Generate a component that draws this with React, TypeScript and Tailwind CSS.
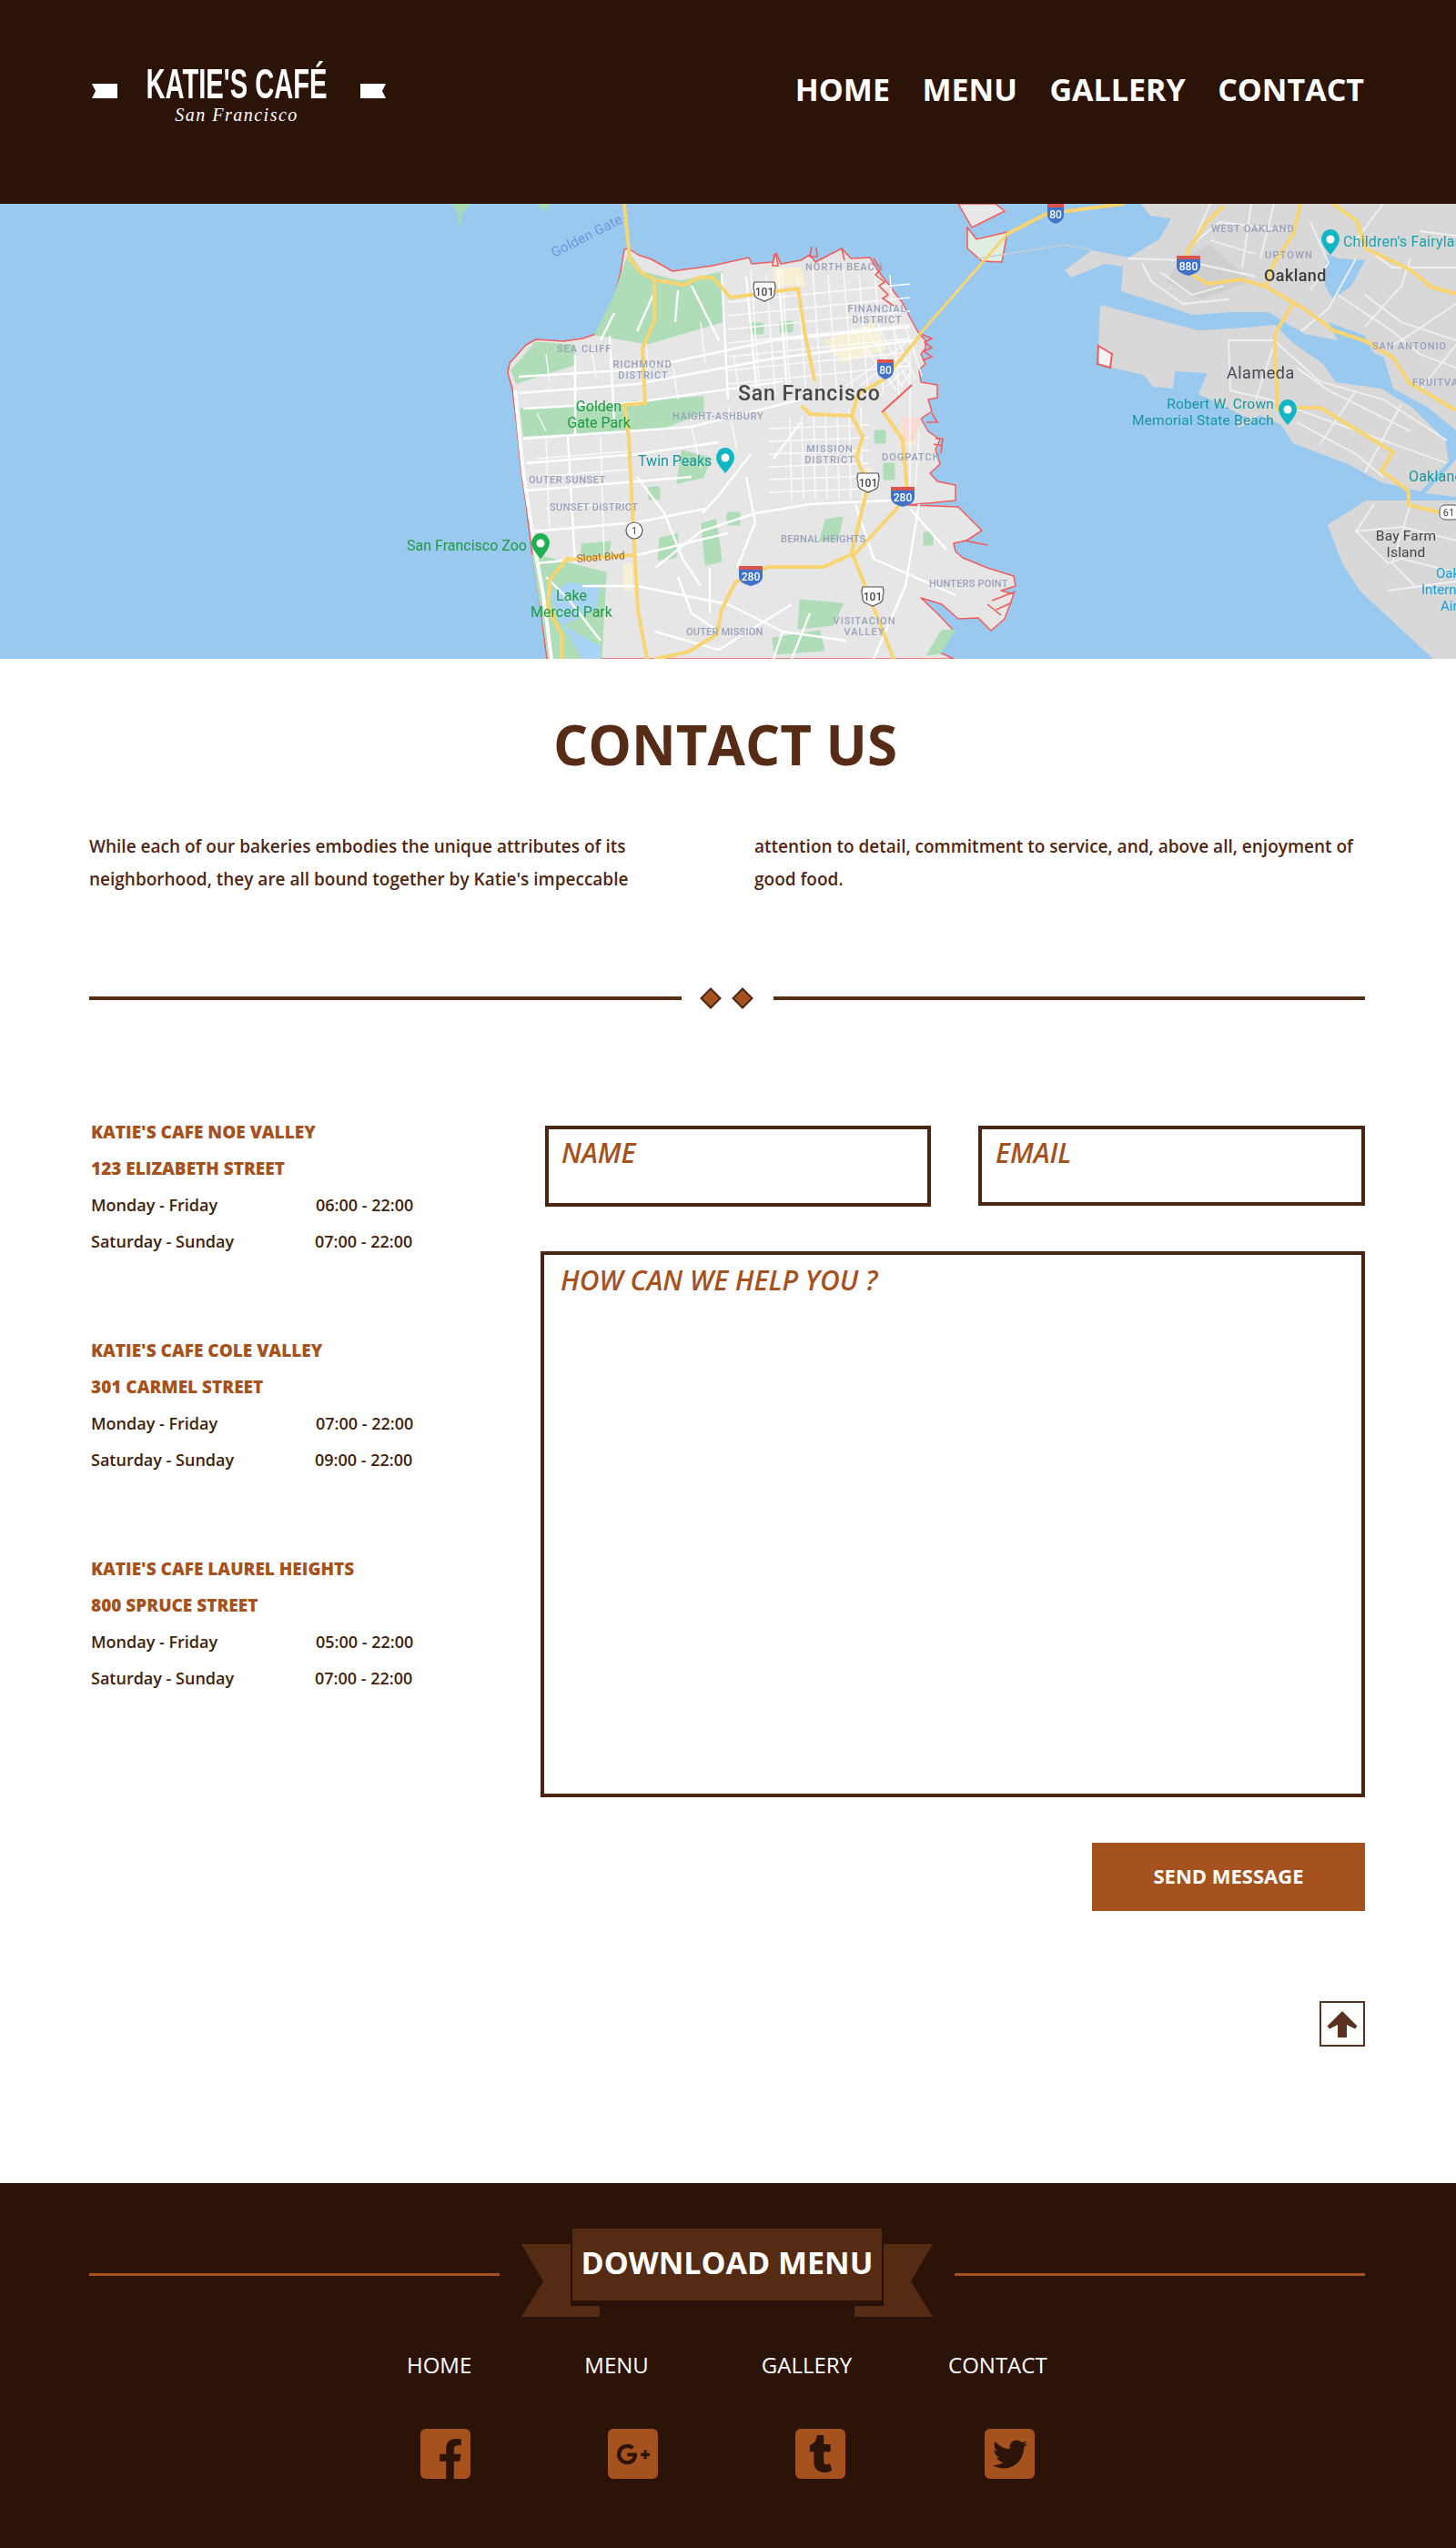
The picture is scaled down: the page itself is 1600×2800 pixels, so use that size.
import React from "react";
import { FaFacebookF, FaGooglePlusG, FaTumblr, FaTwitter } from "react-icons/fa";

type P = number[];
const pts = (a: P) => {
  const out: string[] = [];
  for (let i = 0; i < a.length; i += 2) out.push(a[i] + "," + a[i + 1]);
  return out.join(" ");
};

const SF = [686,50,691,49,701,56,716,61,739,74,783,68,823,59,826,66,849,64,853,54,858,66,880,62,890,56,896,64,925,49,935,60,956,59,968,78,977,89,985,100,992,109,1000,125,1010,143,1017,150,1017,159,1012,165,1017,176,1010,182,1012,196,1030,199,1030,213,1020,215,1024,228,1012,236,1020,250,1033,259,1028,270,1033,286,1022,296,1030,305,1050,309,1050,326,997,331,1053,333,1065,345,1079,359,1062,370,1048,373,1050,382,1058,389,1085,400,1114,409,1116,420,1100,425,1114,429,1104,456,1089,469,1075,455,1053,456,1035,440,1012,433,1030,450,1048,469,1033,493,1048,500,987,500,601,500,592,430,584,379,578,330,573,296,568,245,563,203,558,186,560,175,568,166,578,155,589,149,605,150,619,151,640,148,655,143,665,125,675,103,682,75];
const OAK = [1254,0,1264,13,1287,16,1274,39,1240,59,1200,51,1170,73,1177,81,1214,66,1234,69,1232,96,1270,108,1310,122,1354,119,1394,119,1420,135,1434,143,1485,153,1521,169,1531,203,1568,223,1600,249,1600,0];
const ALA = [1209,111,1317,139,1368,136,1401,133,1421,153,1454,176,1468,196,1518,203,1551,223,1588,259,1592,283,1561,316,1518,306,1481,286,1421,263,1408,243,1384,232,1375,240,1361,246,1358,240,1372,236,1340,220,1317,209,1327,186,1291,184,1289,203,1267,201,1257,188,1217,179,1207,156];
const BAY = [1501,326,1600,326,1600,500,1575,500,1495,426,1475,395,1459,353];
const EAST = [1566,318,1592,290,1600,280,1600,322];
const parks: P[] = [
  [691,56,675,103,655,143,711,153,793,129,793,76,747,86,706,76],
  [563,183,589,153,630,156,630,176,568,196],
  [573,226,772,213,772,229,727,246,576,254],
  [586,386,665,406,660,500,604,500],
  [750,272,780,280,772,300,745,306],
  [880,436,925,440,915,462,878,466],
  [850,478,900,470,905,490,852,494],
  [772,352,786,348,792,392,776,396],
  [726,368,744,364,742,388,724,390],
  [908,348,925,345,920,368,902,370],
  [1035,470,1048,469,1033,493,1020,495],
  [825,132,838,132,838,142,825,142],[858,130,870,130,870,140,858,140],[962,250,972,250,972,262,962,262],[972,286,982,286,982,302,972,302],[1016,362,1024,362,1024,374,1016,374],[714,312,724,312,724,324,714,324],[800,340,812,340,812,352,800,352],[640,375,670,372,668,385,640,388],
];
const blocks: P[] = [
  [850,70,880,70,885,90,850,90],[905,150,960,130,975,160,925,175],[990,240,1010,240,1005,265,990,265],[950,290,958,290,958,310,950,310],[685,395,695,395,695,425,685,425],
];
const roads: P[] = [
  [570,190,700,182,850,150,1000,135],[570,208,700,198,850,170,1005,150],[575,225,700,218,860,195],[575,258,760,245,880,215],[578,285,700,275,790,262],[580,315,760,300],[585,360,700,350,775,335],[590,395,620,392,700,386,800,362],
  [632,166,632,255],[624,256,632,395],[670,145,675,240],[675,120,660,150],[720,95,700,140],[745,95,742,130],[760,90,790,150],[793,76,800,215],[820,80,832,210],[855,72,865,205],
  [640,420,700,420,800,440,860,470,930,480],[720,400,770,360,830,340,890,330,1000,325],[700,300,730,340,750,390,770,420],[825,275,790,320,772,340],[820,300,830,350,810,400],[880,240,850,280],[745,410,760,450,790,470],[720,470,790,490,870,440],[1010,330,995,420,960,500],[940,330,960,390,1050,430],[860,470,850,500],[890,450,870,500],[600,410,625,435,660,480],
  [1000,335,1040,380],[780,400,780,450],
];
const thin: P[] = [
  [600,165,604,195],[590,230,600,250],[650,160,655,190],[740,180,745,215],[710,150,712,185],
  [590,280,690,272],[592,300,690,292],[600,335,690,328],[660,256,664,390],[600,258,604,360],
  [770,130,775,175],[806,165,812,205],[760,245,770,290],[800,222,810,270],[1000,150,1000,320],[1010,250,1005,325],
];
const g1: P[] = [];
for (let i = 0; i < 10; i++) g1.push([825 + i * 17, 72 + (i % 2) * 6, 835 + i * 17, 210]);
for (let i = 0; i < 7; i++) g1.push([800, 108 + i * 15, 1000, 88 + i * 15]);
for (let i = 0; i < 5; i++) g1.push([935 + i * 15, 135, 985 + i * 7, 205 - i * 4]);
for (let i = 0; i < 5; i++) g1.push([930 + i * 15, 200, 1000, 150 + i * 9]);
const g2: P[] = [];
for (let i = 0; i < 7; i++) g2.push([868 + i * 13, 235 - i * 2, 870 + i * 13, 325]);
for (let i = 0; i < 6; i++) g2.push([845, 247 + i * 14, 955, 243 + i * 14]);
const piers: P[] = [
  [892,47,890,58,898,58,897,48],[925,49,928,62],[851,55,849,68,855,68,853,56],[960,60,968,72,962,78,972,86,966,90,976,100,970,104,982,112],
  [1012,143,1024,148,1016,152,1024,158,1015,162,1024,168,1014,172],[1024,230,1030,240,1018,240],[1028,258,1036,258,1034,274],[1026,264,1036,266],
  [1090,436,1116,426],[1095,446,1112,438],[1085,440,1100,452],[1060,370,1085,375],
];
const eastRoads: P[] = [
  [1240,60,1300,62,1380,80],[1255,65,1265,85,1300,110,1350,105],[1275,75,1310,100,1345,90],
  [1330,0,1310,45,1340,20,1420,30],[1375,0,1365,70],[1400,0,1385,60],[1330,40,1380,55],[1440,20,1460,65,1440,95],[1490,60,1460,115,1430,140],[1520,0,1490,40,1530,70,1600,70],[1470,100,1530,140,1560,165,1600,180],[1500,100,1540,130,1600,150],[1540,90,1500,135],[1600,110,1540,150,1520,160],[1600,155,1560,205],[1560,30,1600,35],[1550,60,1540,90],
  [1350,150,1400,150,1450,195,1520,215,1590,260],[1350,150,1352,205,1395,215,1590,285],[1425,180,1460,205,1550,250],[1490,205,1450,265],[1540,220,1500,295],[1400,155,1380,215],[1425,240,1490,275,1520,300],[1510,330,1490,360,1525,395,1540,390,1600,405],[1490,360,1540,355,1600,370],[1550,330,1530,395,1555,420],[1525,425,1600,415],
];
const bridge = [1010,144,1107,33];
const yellow: P[] = [
  [686,0,691,50,691,59,705,76,721,84,752,89,768,81,783,81,803,103,839,98,877,93,884,140,895,193],
  [719,86,719,129,706,159,709,219,686,221,691,256,696,359,701,446,711,500],
  [882,223,890,231,936,233,948,256,941,279,954,309,936,383,961,446,982,500],
  [1010,146,971,193,943,209,936,233],
  [971,229,992,259,997,316,987,333,941,383,905,399,844,399,808,416,793,446,788,473,757,492,721,500],
  [624,389,604,413,602,443,617,473,617,500],[624,391,696,386],
  [1107,33,1150,11,1234,0],
  [1344,3,1327,19,1304,53,1311,78,1327,88,1364,83,1391,91,1434,116,1465,139,1501,151,1531,169,1548,196,1598,226],
  [1429,0,1421,33,1398,69,1391,91],
  [1465,0,1491,19,1501,49,1551,73,1572,91,1600,99],
  [1421,109,1401,143,1401,156,1404,226],
  [1426,224,1451,224,1531,273,1518,293,1548,316,1548,331,1582,339],
];

const Lbl = ({ x, y, t, c = "#98a1ba", s = 11, a = "start", ls = 1, w = 500 }: { x: number; y: number; t: string; c?: string; s?: number; a?: "start" | "middle" | "end"; ls?: number; w?: number }) => (
  <text x={x} y={y} fill={c} fontSize={s} textAnchor={a} letterSpacing={ls} fontWeight={w}>{t}</text>
);
const US = ({ x, y, t }: { x: number; y: number; t: string }) => (
  <g>
    <path d={`M${x - 11} ${y - 10}h22q2 6 0 10q1 6 -4 8l-7 3l-7 -3q-5 -2 -4 -8q-2 -4 0 -10z`} fill="#fff" stroke="#555" strokeWidth="1.2" />
    <text x={x} y={y + 5} fill="#444" fontSize="12" fontWeight="500" textAnchor="middle">{t}</text>
  </g>
);
const I = ({ x, y, t, w = 13 }: { x: number; y: number; t: string; w?: number }) => (
  <g>
    <path d={`M${x - w} ${y - 7}h${2 * w}v8q0 7 -${w} 10q-${w} -3 -${w} -10z`} fill="#3f72c8" />
    <rect x={x - w} y={y - 11} width={2 * w} height={4} fill="#d9534f" />
    <text x={x} y={y + 5} fill="#fff" fontSize="12" fontWeight="500" textAnchor="middle">{t}</text>
  </g>
);
const Pin = ({ x, y, c }: { x: number; y: number; c: string }) => (
  <g>
    <path d={`M${x} ${y + 16}q-10 -11 -10 -17a10 11 0 1 1 20 0q0 6 -10 17z`} fill={c} />
    <circle cx={x} cy={y - 1} r="4.5" fill="#fff" />
  </g>
);

function MapArt() {
  return (
    <svg viewBox="0 0 1600 500" width="1600" height="500" className="block blur-[0.4px] font-['Roboto',sans-serif]">
      <rect width="1600" height="500" fill="#9ac9f0" />
      <path d="M496 0l6 8 3 20 3-18 10-10zM590 0l8 8 8-8z" fill="#a9dab4" />
      <polygon points={pts(OAK)} fill="#d8d8d8" />
      <polygon points={pts(ALA)} fill="#d8d8d8" />
      <polygon points={pts(BAY)} fill="#d8d8d8" />
      <polygon points={pts(EAST)} fill="#d8d8d8" />
      <polygon points="1207,156 1222,165 1220,180 1206,176" fill="#f4f4f4" stroke="#f05c5c" strokeWidth="2" />
      <polygon points="1053,0 1094,0 1104,8 1068,26" fill="#e8e8e8" stroke="#f05c5c" strokeWidth="1.5" />
      <polygon points="1063,26 1073,39 1107,31 1101,64 1079,63 1063,49" fill="#dfeee0" stroke="#f05c5c" strokeWidth="1.5" />
      <path d="M1075 60L1170 45 1200 51" fill="none" stroke="#c5cfd8" strokeWidth="1.5" />
      <polygon points="1300,60 1330,45 1375,85 1320,105 1280,85" fill="#cfcfcf" />
      <polygon points="1458,55 1470,60 1500,62 1485,90 1465,105 1456,90" fill="#9ac9f0" />
      <polygon points="1460,130 1500,145 1510,165 1470,150" fill="#9ac9f0" />
      <polygon points={pts(SF)} fill="#e6e6e6" stroke="#f05c5c" strokeWidth="1.5" strokeLinejoin="round" />
      {parks.map((p, i) => <polygon key={i} points={pts(p)} fill="#aeddb7" stroke="#aeddb7" strokeWidth="3" strokeLinejoin="round" />)}
      {blocks.map((p, i) => <polygon key={i} points={pts(p)} fill="#f7f0d4" />)}
      <polygon points="604,429 624,416 660,419 655,446 619,463 660,486 660,500 640,500 614,456" fill="#a9d4f5" />
      <polygon points="990,235 1012,235 1004,262 992,262" fill="#fbd9d4" />
      {[...g1, ...g2, ...thin].map((p, i) => <polyline key={i} points={pts(p)} fill="none" stroke="#fbfbfb" strokeWidth="1.4" />)}
      {roads.map((p, i) => <polyline key={i} points={pts(p)} fill="none" stroke="#fff" strokeWidth="2.4" strokeLinejoin="round" />)}
      {eastRoads.map((p, i) => <polyline key={i} points={pts(p)} fill="none" stroke="#f1f1f1" strokeWidth="1.8" />)}
      <polyline points="566,205 575,296 588,380 597,430 606,500" fill="none" stroke="#fff" strokeWidth="4" />
      {piers.map((p, i) => <polyline key={i} points={pts(p)} fill="none" stroke="#f05c5c" strokeWidth="1.6" />)}
      {yellow.map((p, i) => <polyline key={i} points={pts(p)} fill="none" stroke="#f8d570" strokeWidth="4" strokeLinejoin="round" strokeLinecap="round" />)}
      <polyline points={pts(bridge)} fill="none" stroke="#f8d570" strokeWidth="3" />
      <path d="M1002 199L969 229" stroke="#f05c5c" strokeWidth="2" />
      <g transform="rotate(-27 609 59)"><Lbl x={609} y={59} t="Golden Gate" c="#6c96da" s={15} ls={0.3} w={400} /></g>
      <Lbl x={885} y={73} t="NORTH BEACH" />
      <Lbl x={964} y={119} t="FINANCIAL" a="middle" />
      <Lbl x={964} y={131} t="DISTRICT" a="middle" />
      <Lbl x={612} y={163} t="SEA CLIFF" />
      <Lbl x={706} y={180} t="RICHMOND" a="middle" />
      <Lbl x={707} y={192} t="DISTRICT" a="middle" />
      <Lbl x={811} y={216} t="San Francisco" c="#484848" s={23} ls={0.9} w={500} />
      <Lbl x={658} y={228} t="Golden" c="#1f9a43" s={16} ls={0} w={400} a="middle" />
      <Lbl x={658} y={246} t="Gate Park" c="#1f9a43" s={16} ls={0} w={400} a="middle" />
      <Lbl x={739} y={237} t="HAIGHT-ASHBURY" ls={0.6} />
      <Lbl x={912} y={273} t="MISSION" a="middle" />
      <Lbl x={912} y={285} t="DISTRICT" a="middle" />
      <Lbl x={969} y={282} t="DOGPATCH" />
      <Lbl x={701} y={288} t="Twin Peaks" c="#16979c" s={16} ls={0} w={400} />
      <Lbl x={581} y={307} t="OUTER SUNSET" ls={0.5} />
      <Lbl x={604} y={337} t="SUNSET DISTRICT" ls={0.4} />
      <Lbl x={858} y={372} t="BERNAL HEIGHTS" ls={0.3} />
      <Lbl x={447} y={381} t="San Francisco Zoo" c="#1f9a43" s={16} ls={0} w={400} />
      <g transform="rotate(-4 634 394)"><Lbl x={634} y={394} t="Sloat Blvd" c="#a06a2a" s={12} ls={0} w={400} /></g>
      <Lbl x={628} y={436} t="Lake" c="#1f9a43" s={16} ls={0} w={400} a="middle" />
      <Lbl x={628} y={454} t="Merced Park" c="#1f9a43" s={16} ls={0} w={400} a="middle" />
      <Lbl x={1021} y={421} t="HUNTERS POINT" ls={0.2} />
      <Lbl x={754} y={474} t="OUTER MISSION" ls={0.2} />
      <Lbl x={950} y={462} t="VISITACION" a="middle" />
      <Lbl x={950} y={474} t="VALLEY" a="middle" />
      <Lbl x={1331} y={31} t="WEST OAKLAND" ls={0.8} />
      <Lbl x={1390} y={60} t="UPTOWN" ls={1.2} />
      <Lbl x={1389} y={85} t="Oakland" c="#3d3d3d" s={18} ls={0.4} />
      <Lbl x={1476} y={47} t="Children's Fairyland" c="#17a2ab" s={16} ls={0.2} w={400} />
      <Lbl x={1508} y={160} t="SAN ANTONIO" ls={0.9} />
      <Lbl x={1552} y={200} t="FRUITVALE" ls={1} />
      <Lbl x={1348} y={192} t="Alameda" c="#4a4556" s={18} ls={0.5} w={400} />
      <Lbl x={1400} y={225} t="Robert W. Crown" c="#14979b" s={15.5} ls={0.2} w={400} a="end" />
      <Lbl x={1400} y={243} t="Memorial State Beach" c="#14979b" s={15.5} ls={0.2} w={400} a="end" />
      <Lbl x={1548} y={305} t="Oakland" c="#14979b" s={16} ls={0.2} w={400} />
      <Lbl x={1545} y={370} t="Bay Farm" c="#444" s={15.5} ls={0.2} w={400} a="middle" />
      <Lbl x={1545} y={388} t="Island" c="#444" s={15.5} ls={0.2} w={400} a="middle" />
      <Lbl x={1578} y={411} t="Oakland" c="#1a9fd8" s={15} ls={0} w={400} />
      <Lbl x={1562} y={429} t="International" c="#1a9fd8" s={15} ls={0} w={400} />
      <Lbl x={1583} y={447} t="Airport" c="#1a9fd8" s={15} ls={0} w={400} />
      <Pin x={797} y={280} c="#12b5c4" />
      <Pin x={594} y={374} c="#1fb04f" />
      <Pin x={1462} y={40} c="#12b5c4" />
      <Pin x={1415} y={227} c="#12b5c4" />
      <US x={840} y={96} t="101" />
      <US x={954} y={306} t="101" />
      <US x={959} y={431} t="101" />
      <I x={973} y={182} t="80" w={9} />
      <I x={992} y={322} t="280" />
      <I x={825} y={409} t="280" />
      <I x={1160} y={11} t="80" w={9} />
      <I x={1306} y={68} t="880" />
      <circle cx="697" cy="359" r="9" fill="#fff" stroke="#555" strokeWidth="1.2" />
      <text x="697" y="363" fontSize="11" fill="#444" textAnchor="middle">1</text>
      <rect x="1582" y="331" width="22" height="16" rx="6" fill="#fff" stroke="#555" />
      <text x="1592" y="343" fontSize="11" fill="#444" textAnchor="middle">61</text>
    </svg>
  );
}

const Ribbon = ({ className }: { className: string }) => (
  <svg viewBox="0 0 28 16" width="28" height="16" className={className}><path d="M0 0H28V16H0L4 8Z" fill="#fff" /></svg>
);

const Diamond = () => (
  <svg viewBox="0 0 24 24" width="24" height="24" className="block"><path d="M12 1.5L22.5 12 12 22.5 1.5 12Z" fill="#a5521f" stroke="#4a2512" strokeWidth="2" /></svg>
);

const locations = [
  { n: "KATIE'S CAFE NOE VALLEY", a: "123 ELIZABETH STREET", w: "06:00 - 22:00", s: "07:00 - 22:00" },
  { n: "KATIE'S CAFE COLE VALLEY", a: "301 CARMEL STREET", w: "07:00 - 22:00", s: "09:00 - 22:00" },
  { n: "KATIE'S CAFE LAUREL HEIGHTS", a: "800 SPRUCE STREET", w: "05:00 - 22:00", s: "07:00 - 22:00" },
];

export default function App() {
  return (
    <div className="w-[1600px] h-[2800px] bg-white overflow-hidden font-['Open_Sans',sans-serif]">
      <header className="h-[224px] bg-[#2c1308] flex justify-between pl-[101px] pr-[101px]">
        <div className="flex items-start w-[323px] pt-[68px]">
          <Ribbon className="block mt-[24px] shrink-0" />
          <div className="w-[262px] flex flex-col items-center">
            <div className="h-[46px] w-full flex justify-center text-white whitespace-nowrap font-['Liberation_Sans',sans-serif] font-bold text-[47px] leading-[46px] scale-x-[0.62] mt-[-1px] pt-[2px]">KATIE'S CAFÉ</div>
            <div className="text-white font-['Liberation_Serif',serif] italic text-[20px] leading-[20px] mt-[3px] tracking-[1.5px] whitespace-nowrap">San Francisco</div>
          </div>
          <Ribbon className="block mt-[24px] shrink-0 rotate-180 ml-[5px]" />
        </div>
        <nav className="flex gap-[35.5px] pt-[74px] text-white font-bold text-[34px] leading-[48px] whitespace-nowrap h-fit">
          <span>HOME</span>
          <span>MENU</span>
          <span>GALLERY</span>
          <span>CONTACT</span>
        </nav>
      </header>

      <section className="h-[500px] overflow-hidden"><MapArt /></section>

      <main className="pl-[98px] pr-[100px]">
        <h1 className="mt-[58px] pr-[4px] text-center font-bold text-[60px] leading-[72px] text-[#562c17]">CONTACT US</h1>
        <p className="mt-[58px] columns-2 gap-[60px] text-[19px] leading-[36px] font-semibold text-[#4f2612]">
          While each of our bakeries embodies the unique attributes of its neighborhood, they are all bound together by Katie's impeccable attention to detail, commitment to service, and, above all, enjoyment of good food.
        </p>
        <div className="mt-[101px] h-6 flex items-center">
          <div className="flex-1 h-1 bg-[#562c17]" />
          <div className="flex gap-[11px] ml-[20px] mr-[22px]"><Diamond /><Diamond /></div>
          <div className="flex-1 h-1 bg-[#562c17]" />
        </div>

        <div className="mt-[114px] flex">
          <div className="w-[496px] pl-[2px] pt-[1px] flex flex-col gap-[80px] leading-[40px]">
            {locations.map((l) => (
              <div key={l.n}>
                <div className="font-extrabold text-[19px] text-[#a5521f]">{l.n}</div>
                <div className="font-extrabold text-[19px] text-[#a5521f]">{l.a}</div>
                <div className="flex font-semibold text-[18px] text-[#3f1f0e]"><span className="w-[247px]">Monday - Friday</span><span>{l.w}</span></div>
                <div className="flex font-semibold text-[18px] text-[#3f1f0e]"><span className="w-[246px]">Saturday - Sunday</span><span>{l.s}</span></div>
              </div>
            ))}
          </div>
          <div className="w-[906px] pt-[14px] flex flex-col">
            <div className="flex justify-between items-start pl-[5px]">
              <input placeholder="NAME" className="w-[424px] h-[89px] border-4 border-[#4a2512] pl-[14px] pb-[31px] italic font-semibold text-[30px] placeholder:text-[#a5521f] placeholder:opacity-100 outline-none bg-white" />
              <input placeholder="EMAIL" className="w-[425px] h-[88px] border-4 border-[#4a2512] pl-[15px] pb-[30px] italic font-semibold text-[30px] placeholder:text-[#a5521f] placeholder:opacity-100 outline-none bg-white" />
            </div>
            <textarea placeholder="HOW CAN WE HELP YOU ?" className="mt-[49px] w-[906px] h-[600px] border-4 border-[#4a2512] pl-[18px] pt-[9px] italic font-semibold text-[30px] leading-[38px] placeholder:text-[#a5521f] placeholder:opacity-100 outline-none resize-none block bg-white" />
            <button className="mt-[50px] self-end w-[300px] h-[75px] bg-[#a5521f] text-white font-bold text-[22px] leading-[30px] pb-[3px]">SEND MESSAGE</button>
            <div className="mt-[99px] self-end w-[50px] h-[50px] border-2 border-[#5a3020] flex items-center justify-center">
              <svg viewBox="0 0 34 30" width="34" height="30" className="block"><path d="M17 1L33.5 17.5 31 20.5 22 16V30H12V16L3 20.5 .5 17.5Z" fill="#5a3020" strokeLinejoin="round" /></svg>
            </div>
          </div>
        </div>
      </main>

      <footer className="mt-[150px] h-[401px] bg-[#2c1308] pl-[98px] pr-[100px] pt-[50px]">
        <div className="flex">
          <div className="flex-1 h-[3px] mt-[49px] bg-[#a5521f]" />
          <div className="relative w-[452px] h-[97px] mx-[24px] shrink-0">
            <svg viewBox="0 0 452 97" width="452" height="97" className="absolute inset-0 block">
              <path d="M0 17H54V85H86V97H0L24 58Z" fill="#552c13" />
              <path d="M452 17H398V85H366V97H452L428 58Z" fill="#552c13" />
              <path d="M54 17H58V83H394V17H398V85H54Z" fill="#25110a" />
              <rect x="56" y="0" width="340" height="79" fill="#552c13" />
            </svg>
            <div className="absolute left-[56px] top-0 w-[340px] h-[79px] flex items-center justify-center text-white font-bold text-[34px] leading-[48px] whitespace-nowrap pb-[6px]">DOWNLOAD MENU</div>
          </div>
          <div className="flex-1 h-[3px] mt-[49px] bg-[#a5521f]" />
        </div>
        <nav className="mt-[37px] ml-[349px] flex gap-[124px] text-white text-[24px] leading-[32px] whitespace-nowrap">
          <span>HOME</span>
          <span>MENU</span>
          <span>GALLERY</span>
          <span className="-ml-[18px]">CONTACT</span>
        </nav>
        <div className="mt-[54px] ml-[364px] flex gap-[151px]">
          <a className="relative w-[55px] h-[55px] rounded-[6px] bg-[#a5521f] overflow-hidden text-[#2c1308] block"><FaFacebookF className="absolute left-[11px] top-[11px] w-[44px] h-[44px]" /></a>
          <a className="w-[55px] h-[55px] rounded-[6px] bg-[#a5521f] text-[#2c1308] flex items-center justify-center"><FaGooglePlusG className="w-[40px] h-[30px]" /></a>
          <a className="w-[55px] h-[55px] rounded-[6px] bg-[#a5521f] text-[#2c1308] flex items-center justify-center"><FaTumblr className="w-[30px] h-[41px]" /></a>
          <a className="ml-[2px] w-[55px] h-[55px] rounded-[6px] bg-[#a5521f] text-[#2c1308] flex items-center justify-center"><FaTwitter className="w-[42px] h-[38px]" /></a>
        </div>
      </footer>
    </div>
  );
}
